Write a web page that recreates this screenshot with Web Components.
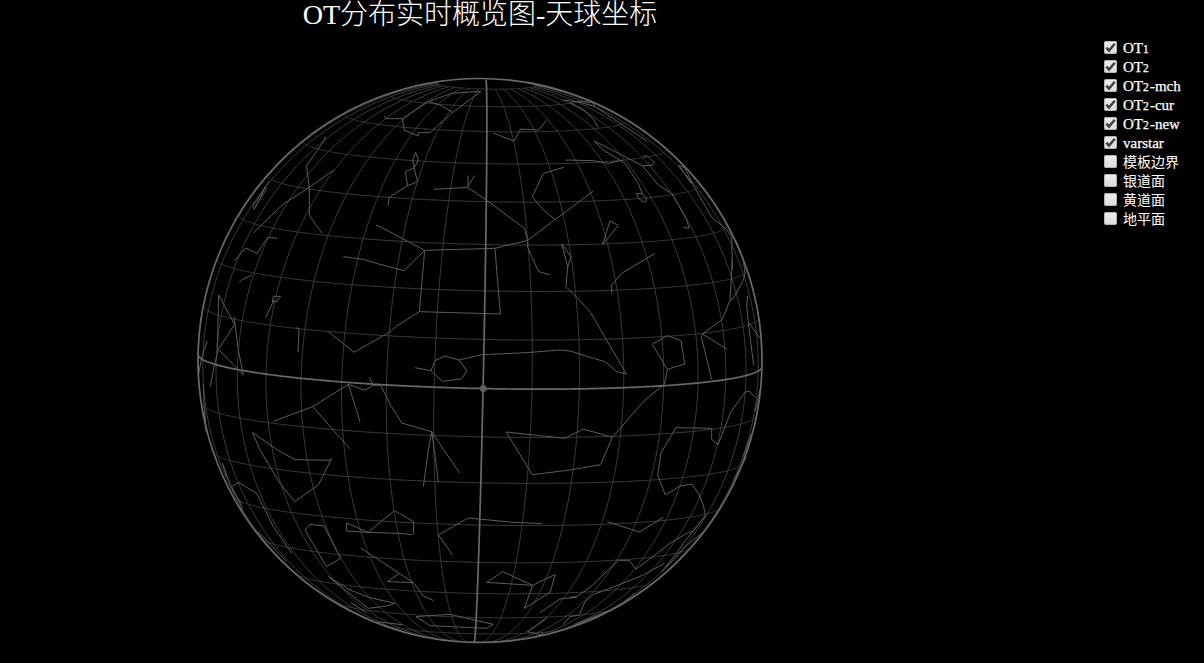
<!DOCTYPE html>
<html lang="zh"><head><meta charset="utf-8"><title>OT分布实时概览图</title>
<style>html,body{margin:0;background:#000;height:100%;overflow:hidden}</style></head>
<body><sky-page></sky-page>
<script>
class SkyTitle extends HTMLElement{constructor(){super();this.attachShadow({mode:'open'}).innerHTML=`
<style>:host{display:block;height:28px}h1{margin:0;text-align:center;font:300 28px/30px "Liberation Serif","Noto Sans CJK SC",serif;color:#fff;white-space:nowrap}</style><h1><slot></slot></h1>`}}
customElements.define('sky-title',SkyTitle);

class SkyToggle extends HTMLElement{connectedCallback(){const on=this.hasAttribute('checked');this.attachShadow({mode:'open'}).innerHTML=`
<style>:host{display:flex;align-items:center;height:19px;gap:6px;color:#fff;font:15px/19px "Liberation Serif","Noto Sans CJK SC",serif;-webkit-text-stroke:.25px #fff;white-space:nowrap}
:host([cjk]){font-size:14px;-webkit-text-stroke:0;}
span{padding-top:2px;line-height:17px}
::slotted(small){font-size:11.5px;letter-spacing:1.2px}
svg{width:13px;height:13px;flex:none;display:block}</style>
<svg viewBox="0 0 13 13"><defs><linearGradient id="g" x2="0" y2="1"><stop stop-color="#ededed"/><stop offset="1" stop-color="#dcdcdc"/></linearGradient></defs><rect x=".5" y=".5" width="12" height="12" rx="1" fill="url(#g)" stroke="#b8b8b0"/>${on?'<path d="M2.4 6.6 5 9.6 10.8 2.8" fill="none" stroke="#404040" stroke-width="2.5"/>':''}</svg><span><slot></slot></span>`}}
customElements.define('sky-toggle',SkyToggle);

/* constellation figures, one entry per sky tile: origin, then polylines in thirds of a pixel */
const FIGURES=[
[190,70,`407,200 402,212 349,288 358,350 358,436 396,490;190,489 225,455 280,402 358,352 432,300;134,572 167,534 201,550 234,502 262,505;238,333 226,352 193,418 189,408 226,350 229,358 196,410`],
[380,70,`13,137 18,146 67,146 145,95 215,70 303,64 218,127 150,188 115,188 115,198 73,181 67,146;145,95 180,105 218,127;107,247 98,270 102,294 115,270 107,247;102,294 76,305 83,347;102,294 113,335 83,347;83,347 27,382 24,409;162,358 263,352 319,390 433,475 443,511 443,532 460,570 475,604 510,615;263,317 265,332 263,352;265,348 284,317;339,189 402,213 422,177 475,180 500,151;552,292 490,310 457,380 485,415 525,449;345,535 443,511 525,449 640,363;134,541 345,535 350,600 361,732 118,725 134,541;-12,465 0,470 134,541 72,602 0,583 -50,568 -110,560;118,725 50,768 32,784 0,803 -78,847 -155,785;545,522 563,590 573,560 545,522;563,590 558,650 600,692 632,728 739,912`],
[570,70,`-15,270 70,272 115,280 160,270;72,213 103,228 180,268 217,287 248,286 253,277 232,258 220,258;72,213 100,240 165,280 205,340 217,372;199,370 218,372 230,385 228,395 220,396 205,385 199,370;217,287 265,345 307,372 350,450 357,475 340,472;120,453 145,466 97,525 120,453;255,550 155,610 125,645 125,670;0,97 45,122 72,150 85,173;-20,90 30,97 75,110 230,213;20,93 65,97 75,107;325,285 370,345 385,372 425,442 470,478;328,285 345,295 368,340;330,290 363,340;470,478 485,500 487,600`],
[190,260,`148,68 155,60 185,45;250,109 272,109 260,124 247,126 250,109;252,120 226,175;86,105 134,193 85,268 160,345 145,270 132,170;86,105 82,265 85,268 72,320 61,380;52,243 37,285 25,345;318,203 327,206 324,276;250,484 368,440 475,373 525,391 549,376 572,376 600,432 635,489 725,515;538,352 549,373;475,373 510,485;368,440 481,568;40,372 43,460 50,515;44,450 48,515`],
[380,260,`155,515 145,570 130,680;155,515 163,570 175,667;155,515 212,600 240,640;105,323 153,332 165,302 195,288 237,300 261,333 244,357 187,364 153,332;237,300 305,284 440,278 540,270 570,273 640,295 675,305 710,335 739,342;378,516 555,535 610,507 697,532;378,516 457,644 570,630 662,614 697,532`],
[570,260,`487,0 480,120 490,115 520,60 525,40 520,0 500,-55;480,120 457,178 398,222 472,268;398,222 394,230 425,358;533,108 530,140 540,230 551,315;538,190 570,235;247,253 292,227 333,242 344,312 292,328 247,253;292,328 283,373 225,420 127,532;263,645 273,578 318,503 425,505 425,538 444,554 483,455 525,397 537,393 555,412;570,390 555,455;545,520 520,590`],
[190,450,`187,-53 262,0 315,29 420,31 425,25 385,105 314,155 270,100 210,0 187,-53;97,40 110,80;97,40 130,125 155,160;125,110 145,97 200,130 250,230 305,310;125,110 155,170 155,185;205,245 290,335;345,240 360,223 402,228 452,325 409,350 345,240;470,243 470,219 534,247;534,247 613,182 671,215 671,250 665,254 630,250 534,247 470,243;513,295 570,332 628,370 670,398 592,395 628,370;670,398 700,438 731,452;415,380 480,420 540,443 615,460 590,468 535,475 415,380;483,458 530,488;560,515 637,524`],
[380,450,`108,500 210,493 340,523 320,535 150,527 108,500;487,221 400,217 265,204 175,255 218,315;320,397 368,365 458,406 320,397;458,406 526,373 510,427 433,475 458,406;443,545 487,555 487,545;443,545 500,505;480,488 540,447 590,442`],
[570,450,`263,75 286,135 330,108 365,102 385,130 400,165 406,197 370,243 350,250 300,280 235,330 198,357 178,331 145,331 60,412 20,440 0,442 20,442;283,340 220,375 120,415 70,433 45,455 28,495 0,500 -20,523;280,202 208,246 112,215;406,197 340,280 320,310 275,365;395,250 345,290 320,320 275,365;195,430 160,458;15,522 110,485;10,528 105,490;530,20 500,75 490,88`]];

class SkyGlobe extends HTMLElement{connectedCallback(){
 const cx=480,cy=332.5,R=282,rad=Math.PI/180,roll=1.25*rad,tilt=5.7*rad,off=.75;
 const line=(pts)=>{let d='',pen=false;for(const[lo,la]of pts){const a=(lo+off)*rad,b=la*rad;
  const X=Math.cos(b)*Math.sin(a),Y0=Math.sin(b),Z0=Math.cos(b)*Math.cos(a);
  const Y=Y0*Math.cos(tilt)-Z0*Math.sin(tilt),Z=Z0*Math.cos(tilt)+Y0*Math.sin(tilt);
  if(Z<0){pen=false;continue}
  const x=X*Math.cos(roll)+Y*Math.sin(roll),y=Y*Math.cos(roll)-X*Math.sin(roll);
  d+=(pen?'L':'M')+(cx+R*x).toFixed(2)+' '+(cy-R*y).toFixed(2);pen=true}return d};
 const span=(a,b,f)=>{const r=[];for(let t=a;t<=b+1e-6;t+=.5)r.push(f(t));return r};
 let g='';
 for(let lo=-180;lo<180;lo+=10)if(lo)g+=line(span(-80,80,t=>[lo,t]));
 for(let la=-80;la<=80;la+=10)if(la)g+=line(span(-180,180,t=>[t,la]));
 const bold=line(span(-90,90,t=>[0,t]))+line(span(-180,180,t=>[t,0]));
 const figs=FIGURES.map(([x,y,s])=>s.split(';').map(p=>'M'+p.trim().split(' ').map(q=>{const[u,v]=q.split(',');return (x+u/3).toFixed(2)+' '+(y-28+v/3).toFixed(2)}).join('L')).join('')).join('');
 this.attachShadow({mode:'open'}).innerHTML=`<style>:host{display:block;height:635px}svg{display:block}</style>
<svg width="960" height="635" fill="none" stroke-linejoin="round"><path d="${g}" stroke="#3c3c3a"/><path d="${figs}" stroke="#5c5c5a"/><path d="${bold}" stroke="#696966" stroke-width="1.7"/><circle cx="${cx}" cy="${cy}" r="${R}" stroke="#696966" stroke-width="1.7"/><circle cx="483.3" cy="360.6" r="3.4" fill="#59645a"/></svg>`}}
customElements.define('sky-globe',SkyGlobe);

class SkyPage extends HTMLElement{constructor(){super();this.attachShadow({mode:'open'}).innerHTML=`
<style>:host{display:grid;grid-template-columns:960px 1fr;height:663px;background:#000;overflow:hidden}
aside{padding:38px 0 0 144px}</style>
<main><sky-title>OT分布实时概览图-天球坐标</sky-title><sky-globe></sky-globe></main>
<aside><sky-toggle checked>OT<small>1</small></sky-toggle><sky-toggle checked>OT<small>2</small></sky-toggle><sky-toggle checked>OT<small>2</small>-mch</sky-toggle><sky-toggle checked>OT<small>2</small>-cur</sky-toggle><sky-toggle checked>OT<small>2</small>-new</sky-toggle><sky-toggle checked>varstar</sky-toggle><sky-toggle cjk>模板边界</sky-toggle><sky-toggle cjk>银道面</sky-toggle><sky-toggle cjk>黄道面</sky-toggle><sky-toggle cjk>地平面</sky-toggle></aside>`}}
customElements.define('sky-page',SkyPage);
</script></body></html>
